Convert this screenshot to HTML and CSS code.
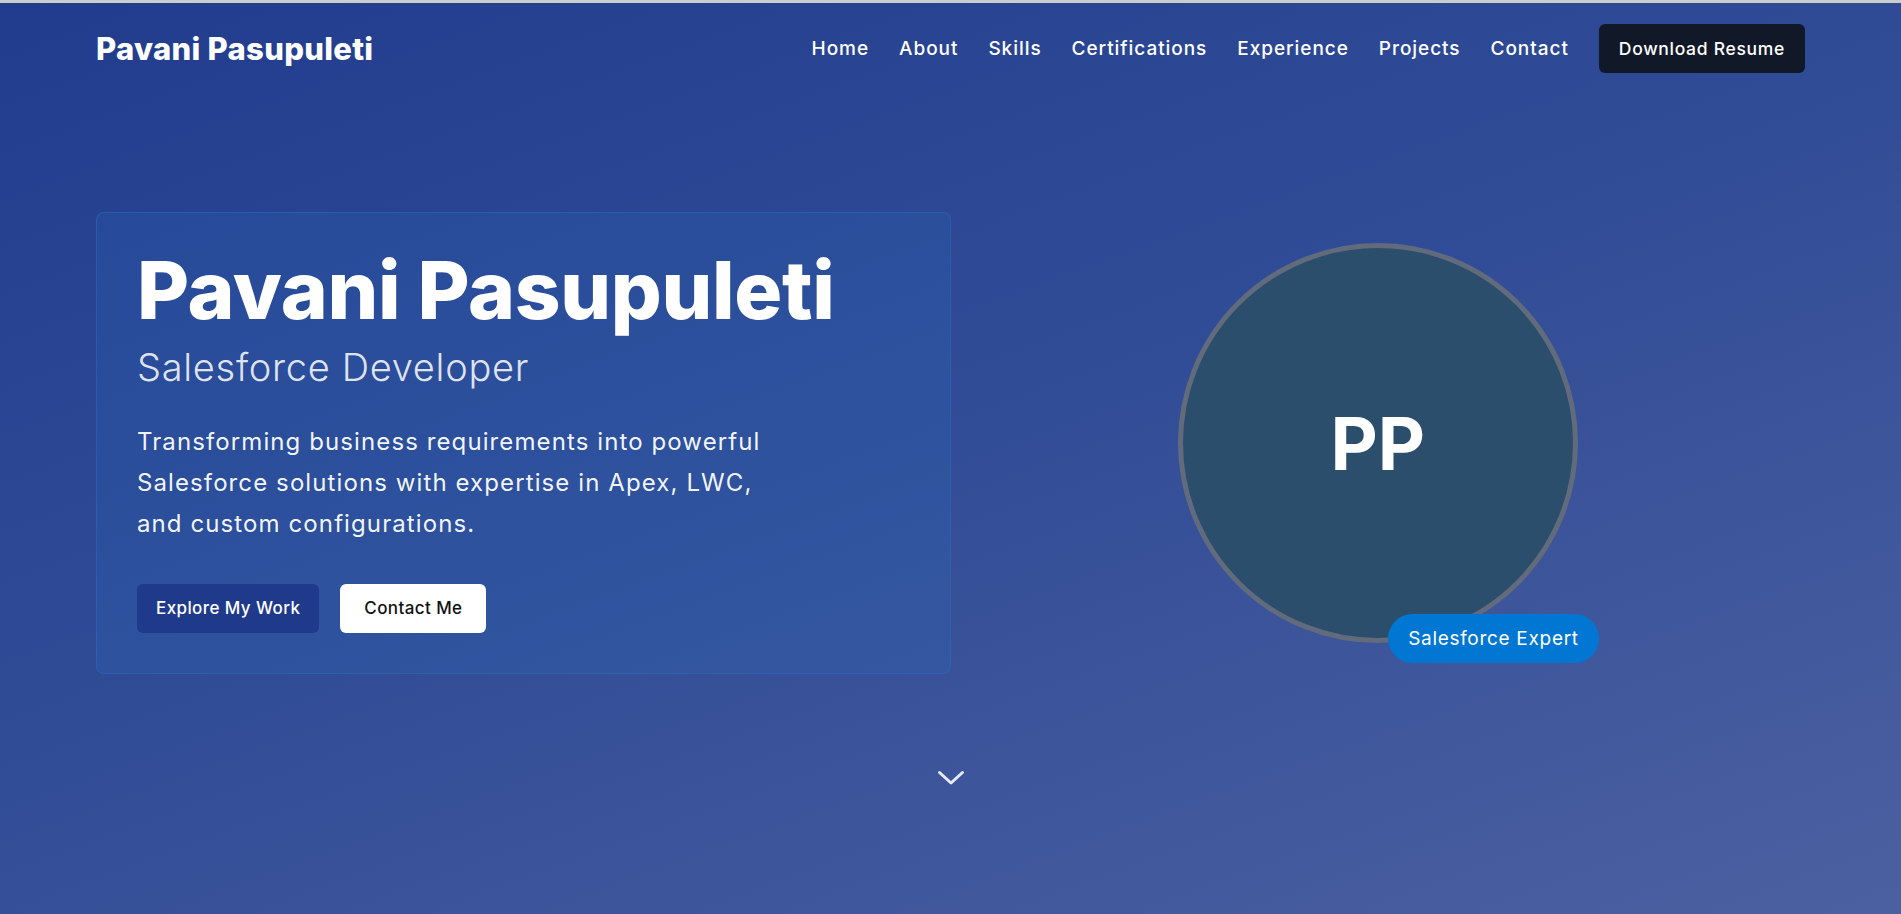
FILE: index.html
```html
<!DOCTYPE html>
<html lang="en">
<head>
<meta charset="utf-8">
<title>Pavani Pasupuleti | Salesforce Developer</title>
<link rel="stylesheet" href="styles.css">
</head>
<body>
<div class="page">
  <header class="nav">
    <a class="logo" href="#">Pavani Pasupuleti</a>
    <nav class="links">
      <a href="#">Home</a>
      <a href="#">About</a>
      <a href="#">Skills</a>
      <a href="#">Certifications</a>
      <a href="#">Experience</a>
      <a href="#">Projects</a>
      <a href="#">Contact</a>
      <a class="resume" href="#">Download Resume</a>
    </nav>
  </header>

  <main class="hero">
    <div class="hero-grid">
      <section class="card">
        <h1 class="title">Pavani Pasupuleti</h1>
        <h2 class="subtitle">Salesforce Developer</h2>
        <p class="intro">Transforming business requirements into powerful Salesforce solutions with expertise in Apex, LWC, and custom configurations.</p>
        <div class="actions">
          <a class="btn btn-primary" href="#">Explore My Work</a>
          <a class="btn btn-light" href="#">Contact Me</a>
        </div>
      </section>
      <div class="visual">
        <div class="avatar">
          <span class="initials">PP</span>
          <span class="badge">Salesforce Expert</span>
        </div>
      </div>
    </div>
    <div class="scroll">
      <svg width="30" height="18" viewBox="0 0 30 18" aria-hidden="true">
        <path d="M3.5 3.5 L15 14 L26.5 3.5" fill="none" stroke="#e6eaf5" stroke-width="3" stroke-linecap="round" stroke-linejoin="round"/>
      </svg>
    </div>
  </main>
</div>
</body>
</html>
```

FILE: styles.css
```css
* { box-sizing: border-box; }

html { height: 100%; }

body {
  margin: 0;
  min-height: 100%;
  border-top: 3px solid #cdcdcd;
  font-family: "Inter", "Liberation Sans", sans-serif;
  color: #ffffff;
  background: linear-gradient(160deg, #213c8d 0%, #324d97 50%, #4b60a0 100%);
}

a { color: inherit; text-decoration: none; }

.page {
  display: flex;
  flex-direction: column;
}

.nav {
  display: flex;
  align-items: center;
  justify-content: space-between;
  padding: 21px 96px;
}

.logo {
  font-size: 31px;
  font-weight: 800;
  letter-spacing: 0.3px;
}

.links {
  display: flex;
  align-items: center;
  gap: 30px;
}

.links a {
  font-size: 19px;
  font-weight: 500;
  letter-spacing: 0.95px;
}

.links .resume {
  background: #111827;
  border-radius: 6px;
  padding: 12px 20px;
  line-height: 25px;
  font-size: 17.5px;
  letter-spacing: 0.7px;
}

.hero {
  display: flex;
  flex-direction: column;
}

.hero-grid {
  display: grid;
  grid-template-columns: 1fr 1fr;
  align-items: center;
  padding: 0 96px;
  margin-top: 118px;
}

.card {
  background: rgba(40, 110, 190, 0.2);
  border: 1px solid rgba(45, 110, 200, 0.45);
  border-radius: 8px;
  padding: 40px;
}

.title {
  margin: 0;
  font-size: 80px;
  line-height: 74px;
  font-weight: 800;
  letter-spacing: -0.3px;
}

.subtitle {
  margin: 18px 0 0;
  font-size: 38px;
  line-height: 1.2;
  font-weight: 300;
  letter-spacing: 0.7px;
  color: rgba(255, 255, 255, 0.86);
}

.intro {
  margin: 30px 0 0;
  max-width: 632px;
  font-size: 24px;
  line-height: 41.2px;
  letter-spacing: 1.1px;
  color: rgba(255, 255, 255, 0.96);
}

.actions {
  display: flex;
  gap: 21px;
  margin-top: 40px;
}

.btn {
  display: inline-block;
  padding: 12px 19px;
  line-height: 25px;
  font-size: 17px;
  font-weight: 500;
  letter-spacing: 0.4px;
  border-radius: 6px;
}

.btn-primary {
  background: #1f3a8b;
  color: #ffffff;
}

.btn-light {
  background: #ffffff;
  color: #111111;
  padding: 12px 24px;
}

.visual {
  display: flex;
  justify-content: center;
  align-items: center;
}

.avatar {
  position: relative;
  width: 400px;
  height: 400px;
  border-radius: 50%;
  background: #2c4e6d;
  border: 5px solid #616b7c;
  display: flex;
  align-items: center;
  justify-content: center;
}

.initials {
  font-size: 73px;
  font-weight: 700;
}

.badge {
  position: absolute;
  right: -26px;
  bottom: -25px;
  background: #0176d3;
  border-radius: 30px;
  padding: 11px 20px;
  line-height: 27px;
  font-size: 19px;
  letter-spacing: 0.7px;
  white-space: nowrap;
}

.scroll {
  display: flex;
  justify-content: center;
  margin-top: 95px;
}

.scroll svg { display: block; }
```
